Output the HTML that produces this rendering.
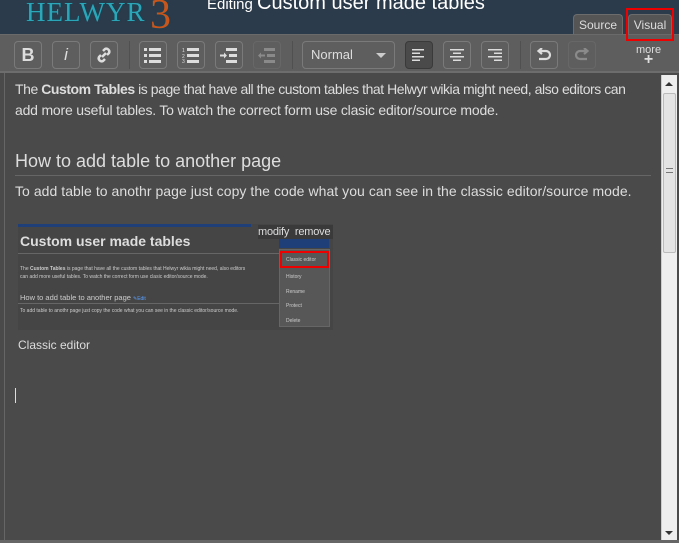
<!DOCTYPE html>
<html><head><style>
*{margin:0;padding:0;box-sizing:border-box}
body{width:679px;height:543px;overflow:hidden;background:#4a4a4a;font-family:"Liberation Sans",Arial,sans-serif;position:relative}
.hdr{position:absolute;left:0;top:0;width:679px;height:34px;background:#2c3b4b;overflow:hidden}
.logo{position:absolute;left:26px;top:-3px;font-family:"Liberation Serif",serif;font-size:27px;letter-spacing:1px;color:#2aa6b8;text-shadow:0 0 2px #0a4a5a}
.logo b{color:#c8551c;font-size:42px;position:absolute;left:124px;top:-6px;font-weight:normal}
.title{position:absolute;left:207px;top:-8px;color:#fff;font-size:15px}
.title b{font-size:20px;font-weight:normal}
.tab{position:absolute;top:14px;height:21px;background:#555;border:1px solid #6c6c6c;border-bottom:none;border-radius:4px 4px 0 0;color:#ddd;font-size:12px;text-align:center;line-height:20px}
.tb{position:absolute;left:0;top:34px;width:679px;height:39px;background:#5e5e5e;border-top:1px solid #6a6a6a;border-bottom:2px solid #6d6d6d}
.btn{position:absolute;top:6px;width:28px;height:28px;border:1px solid #7a7a7a;border-radius:4px;color:#ddd;display:flex;align-items:center;justify-content:center}
.btn.dis{opacity:.35}
.btn.on{background:#4a4a4a;border-color:#3a3a3a}
.sep{position:absolute;top:6px;width:1px;height:28px;background:#505050}
.dd{position:absolute;left:302px;top:6px;width:93px;height:28px;border:1px solid #7a7a7a;border-radius:4px;color:#ddd;font-size:13px;line-height:26px;padding-left:8px}
.dd:after{content:"";position:absolute;right:8px;top:11px;border:5px solid transparent;border-top-color:#ccc}
.more{position:absolute;left:636px;top:10px;color:#ddd;font-size:11px;text-align:center;line-height:10px}
.lb{position:absolute;left:4px;top:73px;width:1px;height:470px;background:#666}
.c{position:absolute;left:15px;color:#ddd;font-size:14px;white-space:nowrap}
.sb{position:absolute;left:661px;top:75px;width:16px;height:466px;background:#eee;border-left:1px solid #ccc}
</style></head><body>
<div class="hdr">
<div class="logo">HELWYR<b>3</b></div>
<div class="title">Editing <b>Custom user made tables</b></div>
<div class="tab" style="left:573px;width:50px">Source</div>
<div class="tab" style="left:628px;width:44px">Visual</div>
</div>
<div style="position:absolute;left:626px;top:8px;width:48px;height:33px;border:2px solid #e00;z-index:5"></div>
<div class="tb">
<div class="btn" style="left:14px;font-weight:bold;font-size:18px">B</div>
<div class="btn" style="left:52px;font-style:italic;font-size:17px">i</div>
<div class="btn" style="left:90px"><svg width="18" height="18" viewBox="0 0 18 18" fill="none" stroke="#ddd" stroke-width="2.5"><path d="M7 11l4-4M8 5l2-2a3 3 0 0 1 4 4l-2 2M10 13l-2 2a3 3 0 0 1-4-4l2-2"/></svg></div>
<div class="sep" style="left:129px"></div>
<div class="btn" style="left:139px"><svg width="18" height="16"><g fill="#ddd"><rect x="0" y="1" width="3" height="3"/><rect x="0" y="7" width="3" height="3"/><rect x="0" y="13" width="3" height="3"/><rect x="5" y="1" width="12" height="3"/><rect x="5" y="7" width="12" height="3"/><rect x="5" y="13" width="12" height="3"/></g></svg></div>
<div class="btn" style="left:177px"><svg width="18" height="16"><g fill="#ddd"><text x="0" y="5" font-size="5" font-family="Liberation Sans">1</text><text x="0" y="11" font-size="5" font-family="Liberation Sans">2</text><text x="0" y="16" font-size="5" font-family="Liberation Sans">3</text><rect x="5" y="1" width="12" height="3"/><rect x="5" y="7" width="12" height="3"/><rect x="5" y="13" width="12" height="3"/></g></svg></div>
<div class="btn" style="left:215px"><svg width="18" height="16"><g fill="#ddd"><rect x="6" y="1" width="11" height="3"/><rect x="9" y="7" width="8" height="3"/><rect x="6" y="13" width="11" height="3"/><path d="M0 7.5h4v-2l3 3-3 3v-2h-4z"/></g></svg></div>
<div class="btn dis" style="left:253px"><svg width="18" height="16"><g fill="#ddd"><rect x="6" y="1" width="11" height="3"/><rect x="9" y="7" width="8" height="3"/><rect x="6" y="13" width="11" height="3"/><path d="M7 7.5h-4v-2l-3 3 3 3v-2h4z"/></g></svg></div>
<div class="sep" style="left:292px"></div>
<div class="dd">Normal</div>
<div class="btn on" style="left:405px"><svg width="14" height="12" fill="#ddd"><rect y="0" width="12" height="1.5"/><rect y="3.5" width="8" height="1.5"/><rect y="7" width="12" height="1.5"/><rect y="10.5" width="8" height="1.5"/></svg></div>
<div class="btn" style="left:443px"><svg width="14" height="12" fill="#ddd"><rect y="0" width="14" height="1.5"/><rect x="3" y="3.5" width="8" height="1.5"/><rect y="7" width="14" height="1.5"/><rect x="3" y="10.5" width="8" height="1.5"/></svg></div>
<div class="btn" style="left:481px"><svg width="14" height="12" fill="#ddd"><rect y="0" width="14" height="1.5"/><rect x="6" y="3.5" width="8" height="1.5"/><rect y="7" width="14" height="1.5"/><rect x="6" y="10.5" width="8" height="1.5"/></svg></div>
<div class="sep" style="left:520px"></div>
<div class="btn" style="left:530px"><svg width="16" height="14" fill="none" stroke="#ddd" stroke-width="2.2"><path d="M4 3h6a4 4 0 0 1 0 8H3"/><path d="M6 0L2.5 3 6 6" /></svg></div>
<div class="btn dis" style="left:568px"><svg width="16" height="14" fill="none" stroke="#ddd" stroke-width="2.2"><path d="M12 3H6a4 4 0 0 0 0 8h7"/><path d="M10 0l3.5 3L10 6"/></svg></div>
<div class="more">more<br><span style="font-size:16px;font-weight:bold">+</span></div>
</div>
<div class="lb"></div>
<div class="c" style="top:81px;letter-spacing:-0.45px">The <b>Custom Tables</b> is page that have all the custom tables that Helwyr wikia might need, also editors can</div>
<div class="c" style="top:102px;letter-spacing:-0.2px">add more useful tables. To watch the correct form use clasic editor/source mode.</div>
<div class="c" style="top:151px;font-size:18px">How to add table to another page</div>
<div style="position:absolute;left:15px;top:175px;width:636px;height:1px;background:#666"></div>
<div class="c" style="top:183px;letter-spacing:0.05px">To add table to anothr page just copy the code what you can see in the classic editor/source mode.</div>
<div style="position:absolute;left:18px;top:224px;width:315px;height:106px;background:#454545;overflow:hidden;font-size:5px;color:#ccc;white-space:nowrap">
<div style="position:absolute;left:0;top:0;width:233px;height:3px;background:#1e3f78"></div>
<div style="position:absolute;left:2px;top:9px;font-size:14px;font-weight:bold;color:#ddd">Custom user made tables</div>
<div style="position:absolute;left:0;top:29px;width:262px;height:1px;background:#666"></div>
<div style="position:absolute;left:2px;top:41px;line-height:8px">The <b>Custom Tables</b> is page that have all the custom tables that Helwyr wikia might need, also editors<br>can add more useful tables. To watch the correct form use clasic editor/source mode.</div>
<div style="position:absolute;left:2px;top:69px;font-size:7.5px">How to add table to another page <span style="color:#5aa0ff;font-size:5px">✎Edit</span></div>
<div style="position:absolute;left:0;top:79px;width:262px;height:1px;background:#666"></div>
<div style="position:absolute;left:2px;top:84px">To add table to anothr page just copy the code what you can see in the classic editor/source mode.</div>
<div style="position:absolute;left:261px;top:15px;width:50px;height:9px;background:#1e3f78"></div>
<div style="position:absolute;left:240px;top:1px;width:75px;height:14px;background:#3a3a3a;font-size:11px;color:#ddd;line-height:14px;letter-spacing:-0.2px">modify&nbsp; remove</div>
<div style="position:absolute;left:261px;top:25px;width:51px;height:78px;background:#575757;border:1px solid #666">
<div style="position:absolute;left:0;top:1px;width:49px;height:17px;border:2px solid #e00;padding:4px 4px;">Classic editor</div>
<div style="position:absolute;left:6px;top:24px">History</div>
<div style="position:absolute;left:6px;top:39px">Rename</div>
<div style="position:absolute;left:6px;top:53px">Protect</div>
<div style="position:absolute;left:6px;top:68px">Delete</div>
</div>
</div>
<div class="c" style="top:338px;left:18px;font-size:12px">Classic editor</div>
<div style="position:absolute;left:15px;top:388px;width:1px;height:15px;background:#ddd"></div>
<div class="sb">
<div style="position:absolute;left:3px;top:7px;border:4px solid transparent;border-bottom-color:#333;border-top:none"></div>
<div style="position:absolute;left:1px;top:18px;width:13px;height:160px;background:#e4e4e4;border:1px solid #bbb;border-radius:2px"></div>
<div style="position:absolute;left:4px;top:93px;width:7px;height:5px;border-top:1px solid #777;border-bottom:1px solid #777"></div>
<div style="position:absolute;left:3px;top:456px;border:4px solid transparent;border-top-color:#333;border-bottom:none"></div>
</div>
<div style="position:absolute;left:0;top:540px;width:679px;height:3px;background:#666"></div>
</body></html>
